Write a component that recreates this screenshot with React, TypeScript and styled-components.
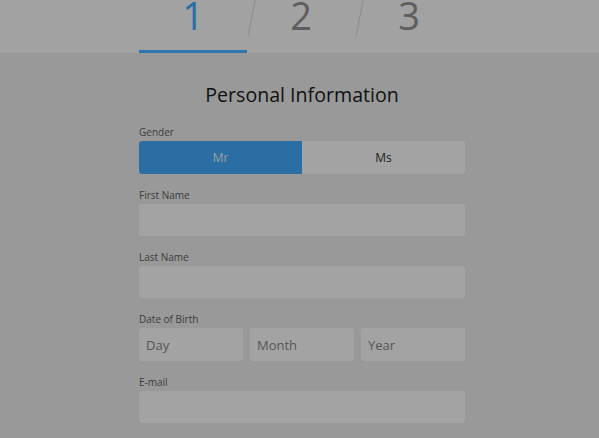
import React from "react";
import styled, { createGlobalStyle } from "styled-components";

const GlobalStyle = createGlobalStyle`
  html, body {
    margin: 0;
    padding: 0;
    background: #999999;
    font-family: "Open Sans", "Liberation Sans", sans-serif;
  }
`;

const steps = ["1", "2", "3"];

export default function App() {
  const [active, setActive] = React.useState(0);
  const [gender, setGender] = React.useState("Mr");

  return (
    <Page>
      <GlobalStyle />
      <StepBar>
        <Steps>
          {steps.map((s, i) => (
            <Step key={s} $active={i === active} $first={i === 0} onClick={() => setActive(i)}>
              {s}
            </Step>
          ))}
        </Steps>
      </StepBar>
      <Form>
        <Title>Personal Information</Title>
        <Field>
          <Label>Gender</Label>
          <Toggle>
            {["Mr", "Ms"].map((g) => (
              <ToggleButton key={g} $on={gender === g} onClick={() => setGender(g)}>
                {g}
              </ToggleButton>
            ))}
          </Toggle>
        </Field>
        <Field>
          <Label>First Name</Label>
          <Input />
        </Field>
        <Field>
          <Label>Last Name</Label>
          <Input />
        </Field>
        <Field>
          <Label>Date of Birth</Label>
          <DateRow>
            <Input $tall placeholder="Day" />
            <Input $tall placeholder="Month" />
            <Input $tall placeholder="Year" />
          </DateRow>
        </Field>
        <Field>
          <Label>E-mail</Label>
          <Input />
        </Field>
      </Form>
    </Page>
  );
}

const Page = styled.div`
  width: 599px;
  height: 438px;
  overflow: hidden;
`;

const StepBar = styled.div`
  height: 53px;
  background: #a2a2a2;
  overflow: hidden;
`;

const Steps = styled.div`
  width: 324px;
  margin: 0 0 0 139px;
  display: grid;
  grid-template-columns: repeat(3, 1fr);
  height: 53px;
`;

const Step = styled.div<{ $active: boolean; $first: boolean }>`
  position: relative;
  height: 53px;
  box-sizing: border-box;
  text-align: center;
  font-family: "Open Sans", "Liberation Sans", sans-serif;
  font-weight: 400;
  font-size: 38px;
  line-height: 30px;
  color: ${(p) => (p.$active ? "#2b6fa5" : "#5e5e5e")};
  border-bottom: 3px solid ${(p) => (p.$active ? "#2f74ab" : "transparent")};
  cursor: pointer;

  &::before {
    content: "";
    display: ${(p) => (p.$first ? "none" : "block")};
    position: absolute;
    left: 0;
    top: -2px;
    width: 1px;
    height: 38px;
    background: #8c8c8c;
    transform: rotate(11deg);
    transform-origin: top left;
    margin-left: 8px;
  }
`;

const Form = styled.div`
  width: 326px;
  margin: 0 0 0 139px;
  display: flex;
  flex-direction: column;
`;

const Title = styled.h2`
  margin: 28px 0 17px;
  text-align: center;
  font-weight: 400;
  font-size: 19.6px;
  line-height: 28px;
  color: #111;
`;

const Field = styled.div`
  display: flex;
  flex-direction: column;
  margin-bottom: 15px;
`;

const Label = styled.label`
  font-size: 10px;
  line-height: 13px;
  color: #3c3c3c;
  margin-bottom: 2px;
`;

const Toggle = styled.div`
  display: flex;
  height: 33px;
  border-radius: 3px;
  overflow: hidden;
  background: #a3a3a3;
`;

const ToggleButton = styled.button<{ $on: boolean }>`
  flex: 1;
  border: none;
  padding: 0;
  font-family: inherit;
  font-size: 12px;
  background: ${(p) => (p.$on ? "#2b6ea3" : "#a3a3a3")};
  color: ${(p) => (p.$on ? "#9aa0a6" : "#222")};
  cursor: pointer;
`;

const Input = styled.input<{ $tall?: boolean }>`
  box-sizing: border-box;
  width: 100%;
  height: ${(p) => (p.$tall ? "33px" : "32px")};
  border: none;
  border-radius: 3px;
  background: #a3a3a3;
  padding: 0 7px;
  font-family: "Open Sans", "Liberation Sans", sans-serif;
  font-size: 13px;
  color: #333;
  outline: none;

  &::placeholder {
    color: #555;
  }
`;

const DateRow = styled.div`
  display: grid;
  grid-template-columns: repeat(3, 1fr);
  gap: 7px;
`;
